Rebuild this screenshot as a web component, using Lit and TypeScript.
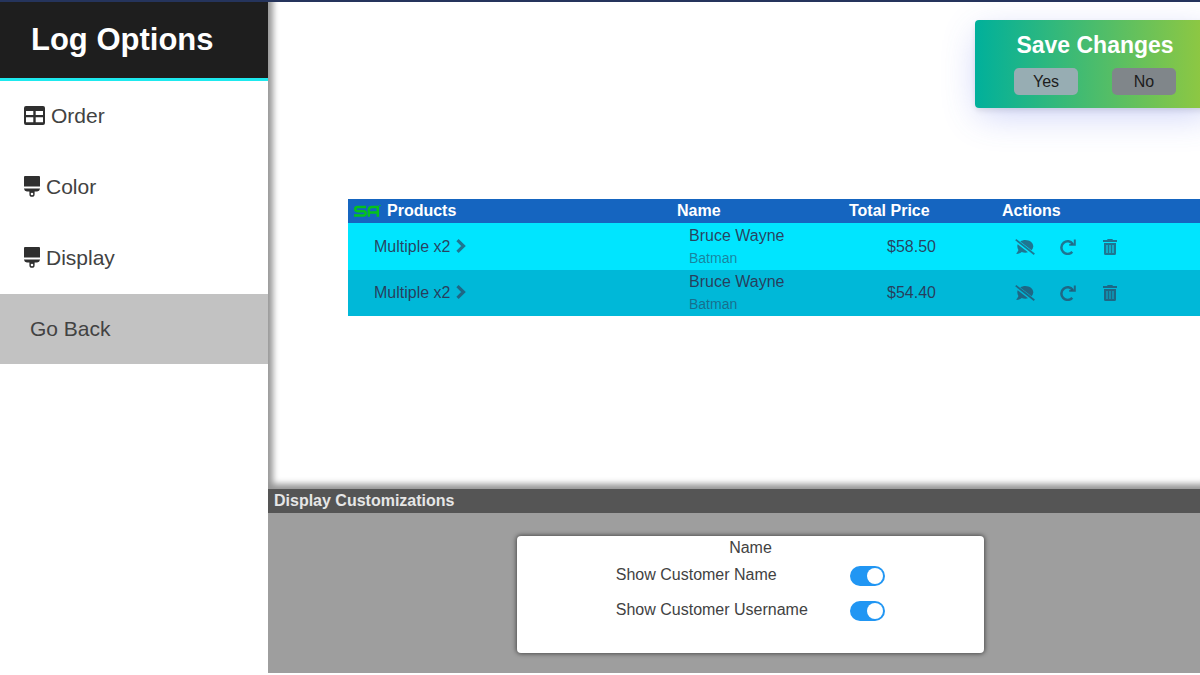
import { LitElement, html, css } from "lit";
import { customElement, state } from "lit/decorators.js";

interface MenuItem {
  label: string;
  icon?: "table" | "brush";
}

interface LogRow {
  products: string;
  name: string;
  username: string;
  total: string;
}

const MENU: MenuItem[] = [
  { label: "Order", icon: "table" },
  { label: "Color", icon: "brush" },
  { label: "Display", icon: "brush" },
  { label: "Go Back" },
];

const ROWS: LogRow[] = [
  { products: "Multiple x2", name: "Bruce Wayne", username: "Batman", total: "$58.50" },
  { products: "Multiple x2", name: "Bruce Wayne", username: "Batman", total: "$54.40" },
];

const icons = {
  table: html`<svg width="21" height="19" viewBox="0 0 21 19" fill="currentColor" aria-hidden="true">
    <path fill-rule="evenodd" d="M2 0h17a2 2 0 0 1 2 2v15a2 2 0 0 1-2 2H2a2 2 0 0 1-2-2V2a2 2 0 0 1 2-2zM2 5v4h7.300V5zM11.700 5v4H19V5zM2 11.300v4.900h7.300v-4.900zM11.700 11.300v4.900H19v-4.900z"/>
  </svg>`,
  brush: html`<svg width="16" height="21" viewBox="0 0 16 21" fill="currentColor" aria-hidden="true">
    <path d="M1 0h14a1 1 0 0 1 1 1v9.500H0V1a1 1 0 0 1 1-1z"/>
    <path d="M0 12.500h16v.3a3 3 0 0 1-3 2.600H3a3 3 0 0 1-3-2.600z"/>
    <path fill-rule="evenodd" d="M5.400 15h5.200v3.200a2.600 2.600 0 0 1-5.200 0zM8 16.700a1.300 1.300 0 1 0 0 2.600 1.300 1.300 0 0 0 0-2.600z"/>
  </svg>`,
  chevron: html`<svg width="10" height="14" viewBox="0 0 10 14" fill="none" stroke="currentColor" stroke-width="3.200" aria-hidden="true">
    <path d="M1.500 1.200 7.500 7l-6 5.800"/>
  </svg>`,
  hide: html`<svg width="20" height="16" viewBox="0 0 20 16" fill="currentColor" aria-hidden="true">
    <path d="M.2 1.300 1.300.1 19.900 14.600 18.800 15.900z"/>
    <path d="M5.300 2.400C6.700 1.400 8.500.9 10.300.9c4.400 0 7.900 2.800 7.900 6.300 0 1.500-.6 2.900-1.700 4z"/>
    <path d="M2.700 5.300 13 13.300c-.9.300-1.800.4-2.700.4-1.300 0-2.500-.3-3.600-.7-1.200.9-2.900 1.900-5 1.900-.3 0-.5-.4-.2-.7.600-.6 1.500-1.900 1.900-3.200C2.800 9.900 2.300 8.600 2.300 7.200c0-.7.100-1.300.4-1.900z"/>
  </svg>`,
  redo: html`<svg width="18" height="16" viewBox="0 0 18 16" aria-hidden="true">
    <path d="M12.800 4.900A6.300 6.300 0 1 0 12.300 12.900" fill="none" stroke="currentColor" stroke-width="2.500"/>
    <path d="M15.800.4v6.400H9.200V4.900l4.600-.3V.4z" fill="currentColor"/>
  </svg>`,
  trash: html`<svg width="14" height="16" viewBox="0 0 14 16" fill="currentColor" aria-hidden="true">
    <path d="M0 1h4l.7-1h4.600l.7 1h4v2H0z"/>
    <path fill-rule="evenodd" d="M1 4h12v10.500a1.500 1.500 0 0 1-1.500 1.500h-9A1.500 1.500 0 0 1 1 14.500zM3.500 6v8h1V6zM6.500 6v8h1V6zM9.500 6v8h1V6z"/>
  </svg>`,
  logo: html`<svg width="27" height="12" viewBox="0 0 27 12" fill="none" stroke="currentColor" stroke-width="2.500" aria-hidden="true">
    <path d="M12 2H3.500Q1.300 2 1.300 4t2.200 2.200H9.500q2.200 0 2.200 2.100t-2.200 2.200H0"/>
    <path d="M14.800 11.700V5q0-3 3-3h6v9.700M14.800 7.500h9"/>
    <path d="M25.300.5h1.400" stroke-width="1"/>
  </svg>`,
};

@customElement("app-root")
export class AppRoot extends LitElement {
  @state() private showName = true;
  @state() private showUsername = true;

  static styles = css`
    :host {
      display: block;
      box-sizing: border-box;
      height: 100vh;
      overflow: hidden;
      position: relative;
      padding-bottom: 2px;
      background: #fff;
      color: #424242;
      font-family: "Liberation Sans", Arial, sans-serif;
      font-size: 16px;
    }
    *,
    *::before {
      box-sizing: border-box;
    }
    svg {
      display: block;
      flex: none;
    }
    button {
      font: inherit;
      border: 0;
      padding: 0;
      background: none;
      color: inherit;
      cursor: pointer;
    }
    .page {
      display: grid;
      grid-template-columns: 268px minmax(0, 1fr);
      height: 100%;
      border-top: 2px solid #25345c;
    }
    .title {
      margin: 0;
      height: 79px;
      padding: 0 31px;
      background: #1e1e1e;
      border-bottom: 3px solid #1ee9ee;
      color: #fff;
      font-size: 31px;
      line-height: 76px;
      white-space: nowrap;
    }
    .menu {
      display: grid;
      gap: 1px;
    }
    .item {
      display: flex;
      align-items: center;
      gap: 6px;
      width: 100%;
      height: 70px;
      padding: 0 24px;
      font-size: 21px;
      text-align: left;
    }
    .item svg {
      margin-bottom: 2px;
      color: #2f2f2f;
    }
    .item.back {
      padding: 0 30px;
      background: #c2c2c2;
    }
    .main {
      display: grid;
      grid-template-rows: minmax(0, 1fr) auto;
    }
    .preview {
      padding: 197px 0 0 80px;
      box-shadow: inset 6px -6px 6px -1px #969696;
    }
    .log {
      width: 100%;
      table-layout: fixed;
      border-collapse: collapse;
      color: rgba(45, 45, 75, 0.88);
    }
    .log th {
      height: 24px;
      padding: 0;
      background: #1565c0;
      color: #fff;
      text-align: left;
    }
    .log td {
      height: 47px;
      padding: 0 12px;
      background: #00e5ff;
    }
    .log tr:nth-child(even) td {
      height: 46px;
      background: #00b8d8;
    }
    .log td.products {
      padding-left: 26px;
    }
    .log td.total {
      padding-left: 38px;
    }
    .col-products {
      width: 329px;
    }
    .col-name {
      width: 172px;
    }
    .col-total {
      width: 153px;
    }
    .head,
    .expand {
      display: flex;
      align-items: center;
    }
    .head {
      gap: 6px;
      padding-left: 6px;
    }
    .head svg {
      color: #05c21c;
    }
    .expand {
      gap: 6px;
    }
    .expand svg,
    .actions {
      color: rgba(45, 60, 90, 0.66);
    }
    .expand svg {
      margin-bottom: 2px;
    }
    .name,
    .username {
      display: block;
      line-height: 23px;
    }
    .username {
      font-size: 14px;
      opacity: 0.6;
    }
    .actions {
      display: flex;
      align-items: center;
      gap: 25px;
      padding-left: 1px;
    }
    .toast {
      position: absolute;
      top: 20px;
      right: -15px;
      width: 240px;
      height: 88px;
      padding: 12px 39px;
      border-radius: 4px;
      background: linear-gradient(to right, #00b09b, #96c93d);
      box-shadow:
        0 3px 6px -1px rgba(0, 0, 0, 0.12),
        0 10px 36px -4px rgba(77, 96, 232, 0.3);
      color: #fff;
      text-align: center;
    }
    .toast h2 {
      margin: 0 -10px;
      font-size: 23px;
      line-height: 26px;
      white-space: nowrap;
    }
    .choices {
      display: flex;
      justify-content: space-between;
      margin-top: 10px;
    }
    .choice {
      width: 64px;
      height: 27px;
      border-radius: 5px;
      background: #97adb3;
      color: #1c1c1c;
    }
    .choice.no {
      background: #80868a;
    }
    .section {
      margin: 0;
      padding: 0 6px;
      background: #555;
      color: #e6e6e6;
      font-size: 16px;
      line-height: 24px;
    }
    .options {
      padding: 23px 0 20px 33px;
      background: #9e9e9e;
    }
    .card {
      width: 52%;
      height: 117px;
      margin: 0 auto;
      border-radius: 4px;
      background: #fff;
      box-shadow: 0 0 4px 1px rgba(0, 0, 0, 0.5);
      text-align: center;
    }
    .card h3 {
      margin: 0;
      font-size: 16px;
      font-weight: 400;
      line-height: 24px;
    }
    .option {
      display: flex;
      align-items: flex-start;
      justify-content: space-between;
      height: 35px;
      margin: 0 99px;
      padding-top: 6px;
      line-height: 18px;
      white-space: nowrap;
    }
    .toggle {
      appearance: none;
      display: flex;
      align-items: center;
      width: 35px;
      height: 20px;
      margin: 0;
      padding: 2px;
      border-radius: 10px;
      background: #bdbdbd;
      cursor: pointer;
    }
    .toggle::before {
      content: "";
      width: 16px;
      height: 16px;
      border-radius: 50%;
      background: #fff;
    }
    .toggle:checked {
      justify-content: flex-end;
      background: #2196f3;
    }
  `;

  private renderItem(item: MenuItem) {
    return html`<button class="item ${item.icon ? "" : "back"}">
      ${item.icon ? icons[item.icon] : ""}<span>${item.label}</span>
    </button>`;
  }

  private renderRow(row: LogRow) {
    return html`<tr>
      <td class="products"><button class="expand">${row.products}${icons.chevron}</button></td>
      <td><span class="name">${row.name}</span><span class="username">${row.username}</span></td>
      <td class="total">${row.total}</td>
      <td>
        <div class="actions">
          <button aria-label="Hide">${icons.hide}</button>
          <button aria-label="Redo">${icons.redo}</button>
          <button aria-label="Delete">${icons.trash}</button>
        </div>
      </td>
    </tr>`;
  }

  render() {
    return html`
      <div class="page">
        <aside>
          <h1 class="title">Log Options</h1>
          <nav class="menu">${MENU.map((item) => this.renderItem(item))}</nav>
        </aside>
        <main class="main">
          <section class="preview">
            <table class="log">
              <colgroup>
                <col class="col-products" />
                <col class="col-name" />
                <col class="col-total" />
                <col />
              </colgroup>
              <thead>
                <tr>
                  <th><div class="head">${icons.logo}Products</div></th>
                  <th>Name</th>
                  <th>Total Price</th>
                  <th>Actions</th>
                </tr>
              </thead>
              <tbody>
                ${ROWS.map((row) => this.renderRow(row))}
              </tbody>
            </table>
          </section>
          <section>
            <h2 class="section">Display Customizations</h2>
            <div class="options">
              <div class="card">
                <h3>Name</h3>
                <div class="option">
                  <label for="show-name">Show Customer Name</label>
                  <input
                    id="show-name"
                    class="toggle"
                    type="checkbox"
                    .checked=${this.showName}
                    @change=${() => (this.showName = !this.showName)}
                  />
                </div>
                <div class="option">
                  <label for="show-username">Show Customer Username</label>
                  <input
                    id="show-username"
                    class="toggle"
                    type="checkbox"
                    .checked=${this.showUsername}
                    @change=${() => (this.showUsername = !this.showUsername)}
                  />
                </div>
              </div>
            </div>
          </section>
        </main>
      </div>
      <div class="toast" role="alertdialog" aria-label="Save Changes">
        <h2>Save Changes</h2>
        <div class="choices">
          <button class="choice">Yes</button>
          <button class="choice no">No</button>
        </div>
      </div>
    `;
  }
}
